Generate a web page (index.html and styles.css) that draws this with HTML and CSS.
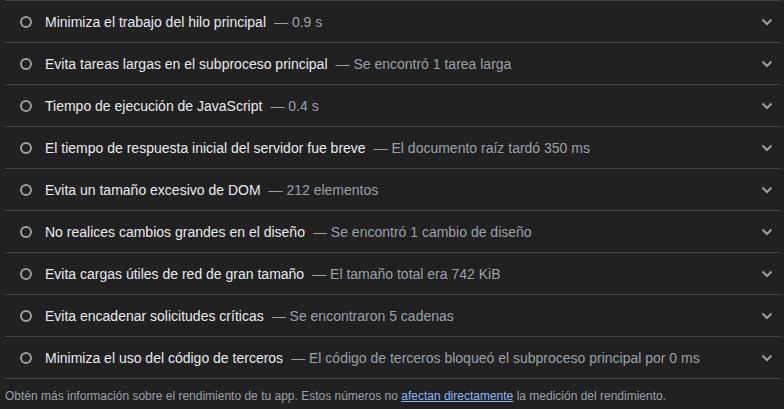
FILE: index.html
```html
<!DOCTYPE html>
<html lang="es">
<head>
<meta charset="utf-8">
<link rel="stylesheet" href="styles.css">
</head>
<body>
<div class="audits">
  <div class="audit"><span class="icon"></span><span class="title">Minimiza el trabajo del hilo principal</span><span class="value">— 0.9 s</span><svg class="chev" viewBox="0 0 12 8"><path d="M1.5 1.5 L6 6 L10.5 1.5" /></svg></div>
  <div class="audit"><span class="icon"></span><span class="title">Evita tareas largas en el subproceso principal</span><span class="value">— Se encontró 1 tarea larga</span><svg class="chev" viewBox="0 0 12 8"><path d="M1.5 1.5 L6 6 L10.5 1.5" /></svg></div>
  <div class="audit"><span class="icon"></span><span class="title">Tiempo de ejecución de JavaScript</span><span class="value">— 0.4 s</span><svg class="chev" viewBox="0 0 12 8"><path d="M1.5 1.5 L6 6 L10.5 1.5" /></svg></div>
  <div class="audit"><span class="icon"></span><span class="title">El tiempo de respuesta inicial del servidor fue breve</span><span class="value">— El documento raíz tardó 350 ms</span><svg class="chev" viewBox="0 0 12 8"><path d="M1.5 1.5 L6 6 L10.5 1.5" /></svg></div>
  <div class="audit"><span class="icon"></span><span class="title">Evita un tamaño excesivo de DOM</span><span class="value">— 212 elementos</span><svg class="chev" viewBox="0 0 12 8"><path d="M1.5 1.5 L6 6 L10.5 1.5" /></svg></div>
  <div class="audit"><span class="icon"></span><span class="title">No realices cambios grandes en el diseño</span><span class="value">— Se encontró 1 cambio de diseño</span><svg class="chev" viewBox="0 0 12 8"><path d="M1.5 1.5 L6 6 L10.5 1.5" /></svg></div>
  <div class="audit"><span class="icon"></span><span class="title">Evita cargas útiles de red de gran tamaño</span><span class="value">— El tamaño total era 742 KiB</span><svg class="chev" viewBox="0 0 12 8"><path d="M1.5 1.5 L6 6 L10.5 1.5" /></svg></div>
  <div class="audit"><span class="icon"></span><span class="title">Evita encadenar solicitudes críticas</span><span class="value">— Se encontraron 5 cadenas</span><svg class="chev" viewBox="0 0 12 8"><path d="M1.5 1.5 L6 6 L10.5 1.5" /></svg></div>
  <div class="audit"><span class="icon"></span><span class="title">Minimiza el uso del código de terceros</span><span class="value">— El código de terceros bloqueó el subproceso principal por 0 ms</span><svg class="chev" viewBox="0 0 12 8"><path d="M1.5 1.5 L6 6 L10.5 1.5" /></svg></div>
</div>
<p class="footer">Obtén más información sobre el rendimiento de tu app. Estos números no <a href="#">afectan directamente</a> la medición del rendimiento.</p>
</body>
</html>
```
FILE: styles.css
```css
html, body {
  margin: 0;
  padding: 0;
  background: #212121;
  height: 100%;
  overflow: hidden;
}
body {
  font-family: "Liberation Sans", Arial, sans-serif;
  color: #e8e8e8;
}
.audits {
  margin-left: 5px;
  width: 776px;
  border-top: 1px solid #424242;
}
.audit {
  display: flex;
  align-items: center;
  height: 41px;
  border-bottom: 1px solid #424242;
  padding-left: 15px;
  padding-right: 8px;
  font-size: 14px;
}
.icon {
  width: 8px;
  height: 8px;
  border: 2px solid #9e9e9e;
  border-radius: 50%;
  flex: none;
  margin-right: 13px;
}
.title {
  color: #e8eaed;
  white-space: nowrap;
}
.value {
  color: #9aa0a6;
  margin-left: 8px;
  white-space: nowrap;
}
.chev {
  margin-left: auto;
  width: 12px;
  height: 8px;
  fill: none;
  stroke: #9e9e9e;
  stroke-width: 2;
}
.footer {
  margin: 10px 0 0 5px;
  font-size: 12px;
  color: #9aa0a6;
}
.footer a {
  color: #8ab4f8;
  text-decoration: underline;
}
```
